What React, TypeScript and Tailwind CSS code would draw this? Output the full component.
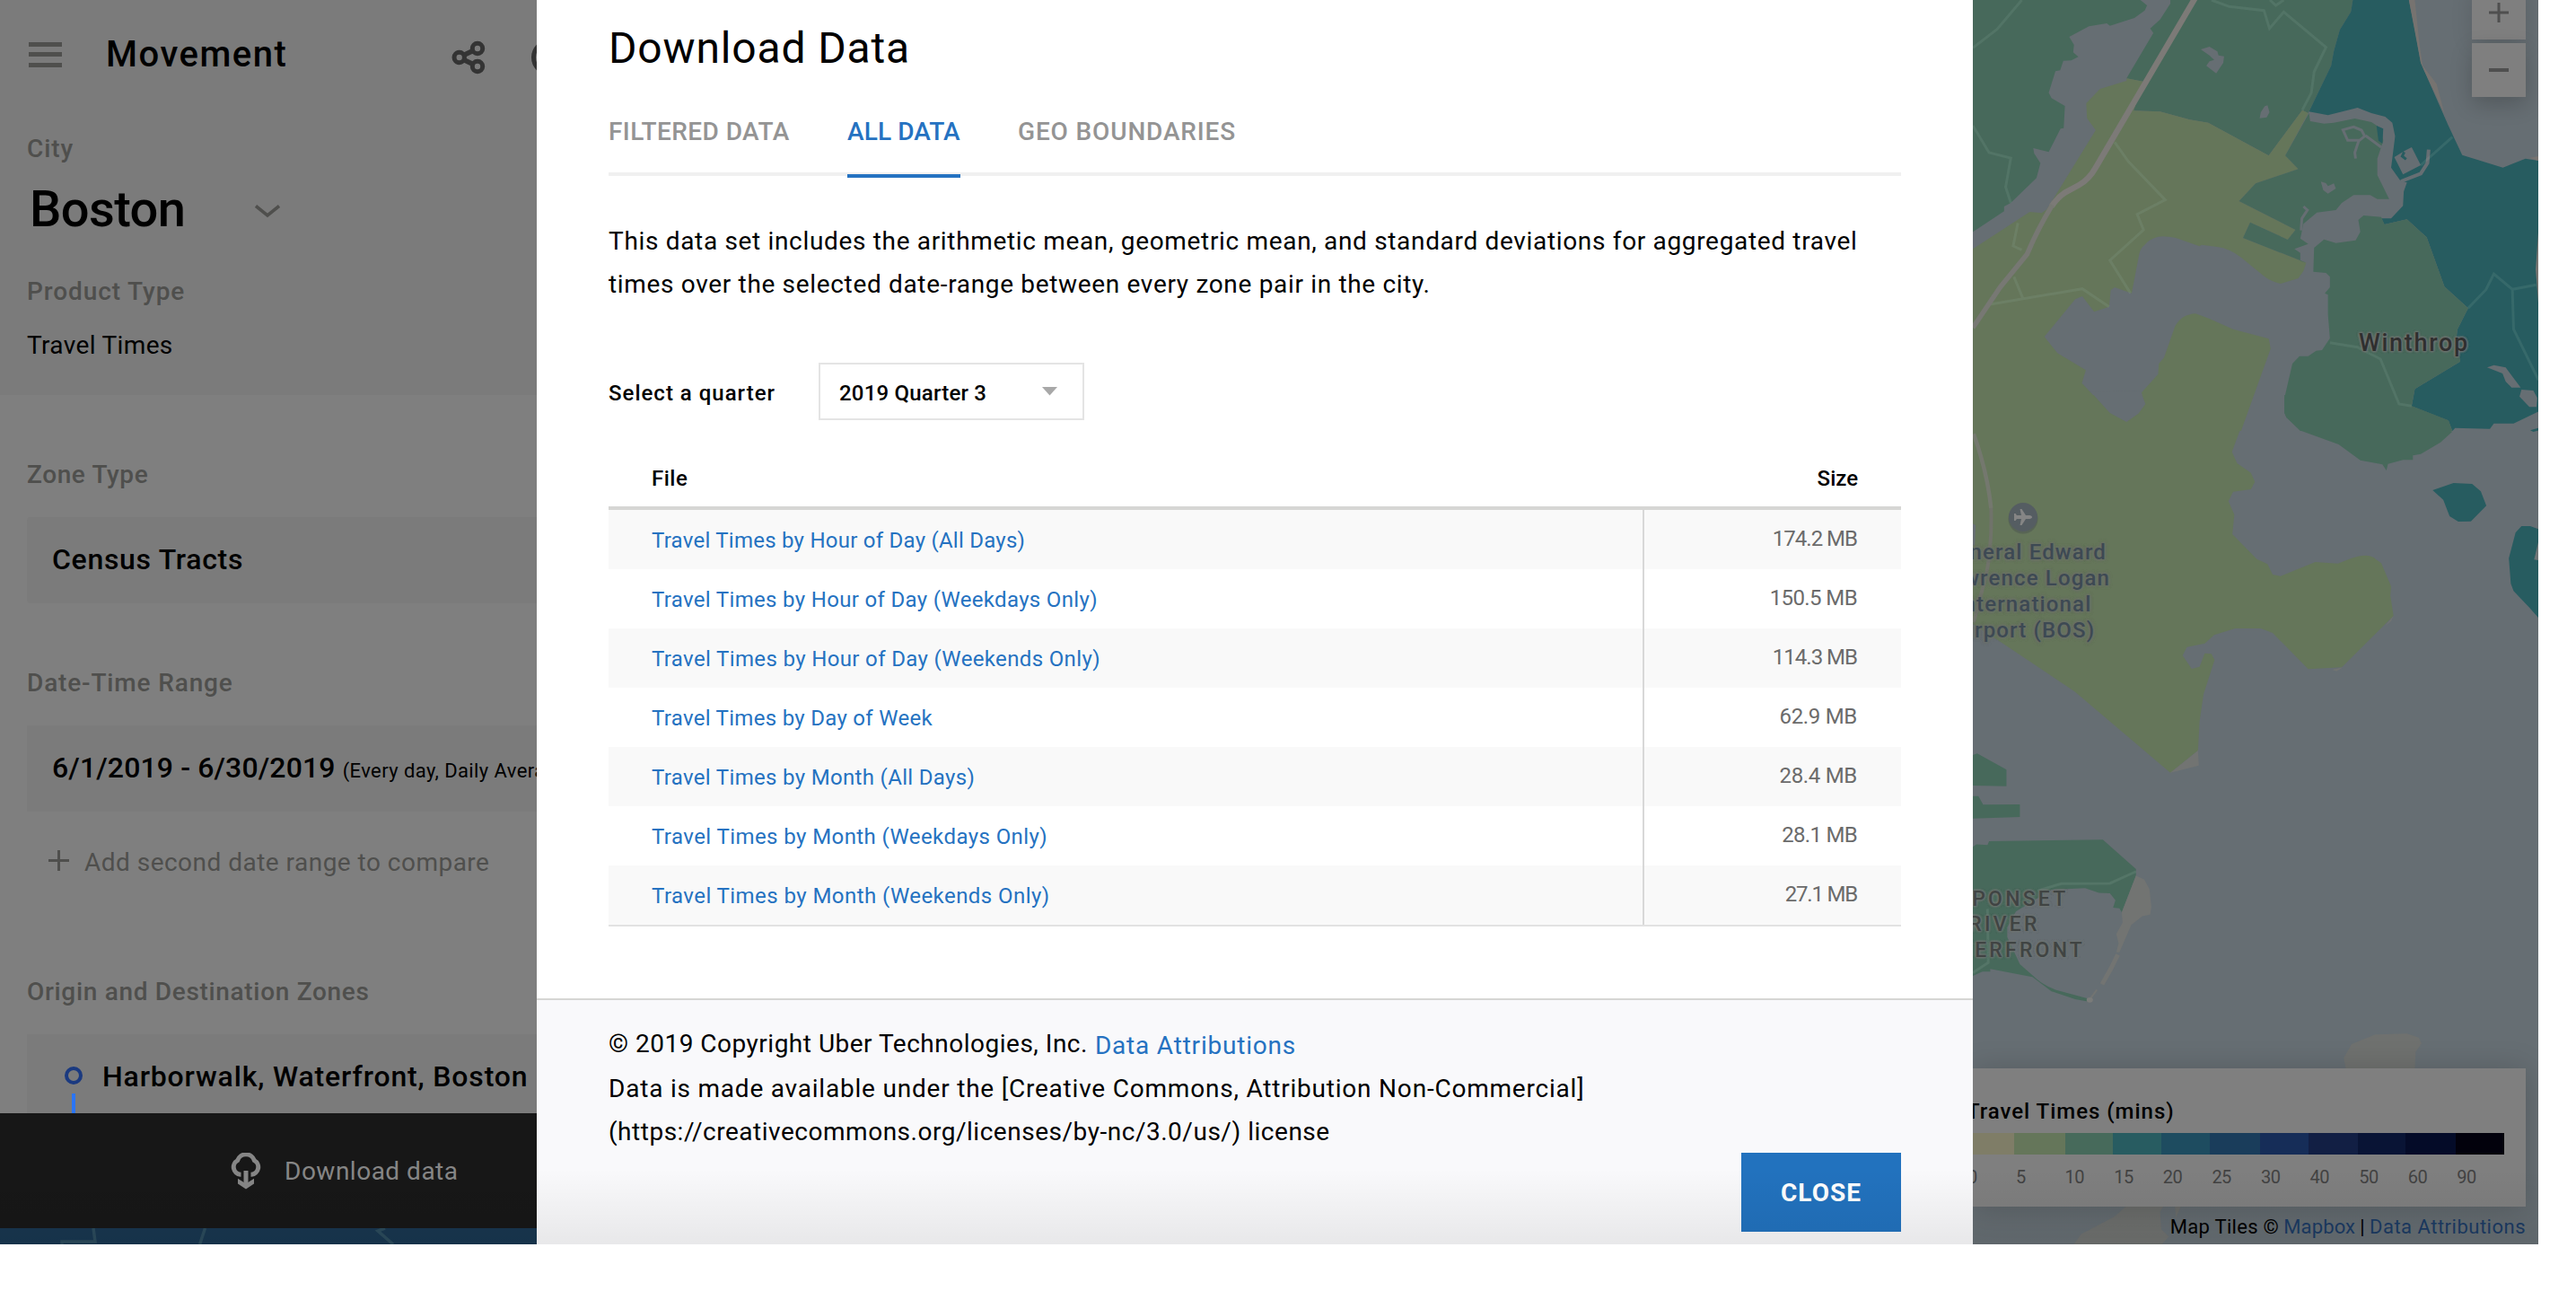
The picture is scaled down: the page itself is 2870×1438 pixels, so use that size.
import type { ReactNode } from "react";

const files = [
  { name: "Travel Times by Hour of Day (All Days)", size: "174.2 MB", nameSpacing: "tracking-[0.25px]", spacing: "tracking-[-1px]" },
  { name: "Travel Times by Hour of Day (Weekdays Only)", size: "150.5 MB", nameSpacing: "tracking-[0.33px]", spacing: "tracking-[-0.6px]" },
  { name: "Travel Times by Hour of Day (Weekends Only)", size: "114.3 MB", nameSpacing: "tracking-[0.36px]", spacing: "tracking-[-1px]" },
  { name: "Travel Times by Day of Week", size: "62.9 MB", nameSpacing: "tracking-[0.3px]", spacing: "tracking-[-0.3px]" },
  { name: "Travel Times by Month (All Days)", size: "28.4 MB", nameSpacing: "tracking-[0.33px]", spacing: "tracking-[-0.3px]" },
  { name: "Travel Times by Month (Weekdays Only)", size: "28.1 MB", nameSpacing: "tracking-[0.42px]", spacing: "tracking-[-0.7px]" },
  { name: "Travel Times by Month (Weekends Only)", size: "27.1 MB", nameSpacing: "tracking-[0.44px]", spacing: "tracking-[-1.2px]" },
];

const scale = [
  { width: "w-[46px]", color: "bg-[#7f7d67]" },
  { width: "w-[57px]", color: "bg-[#65765a]" },
  { width: "w-[53px]", color: "bg-[#476a5b]" },
  { width: "w-[54px]", color: "bg-[#285c61]" },
  { width: "w-[54px]", color: "bg-[#1e4c60]" },
  { width: "w-[56px]", color: "bg-[#1a3d5b]" },
  { width: "w-[54px]", color: "bg-[#162d58]" },
  { width: "w-[55px]", color: "bg-[#121f44]" },
  { width: "w-[53px]", color: "bg-[#091435]" },
  { width: "w-[56px]", color: "bg-[#040b28]" },
  { width: "w-[54px]", color: "bg-[#02010c]" },
];

const ticks = ["5", "10", "15", "20", "25", "30", "40", "50", "60", "90"];

function FieldLabel({ children, className }: { children: ReactNode; className: string }) {
  return (
    <div className={`ml-[30px] h-[40px] shrink-0 text-[28px] leading-[42px] font-medium text-[#4f4f4d] ${className}`}>
      {children}
    </div>
  );
}

function ShareIcon() {
  return (
    <svg width="38" height="40" viewBox="0 0 38 40" fill="none" stroke="#343434" strokeWidth="5">
      <circle cx="8.7" cy="20" r="5.7" />
      <circle cx="29" cy="10" r="5.7" />
      <circle cx="29" cy="30" r="5.7" />
      <path d="M13.5 17.5 24 12.5M13.5 22.5 24 27.5" strokeWidth="5.5" />
    </svg>
  );
}

function CloudDownloadIcon() {
  return (
    <svg width="38" height="41" viewBox="0 0 38 41" fill="none" stroke="#868686" strokeWidth="5">
      <path d="M13.5 24.3H12.8A8.4 8.4 0 0 1 9.6 8.6 9.9 9.9 0 0 1 28.4 8.6 8.4 8.4 0 0 1 25.2 24.3H24.5" />
      <path d="M19 20V35" />
      <path d="M10 28.8 19 34.6 28 28.8V34.4L19 40.4 10 34.4Z" fill="#868686" stroke="none" />
    </svg>
  );
}

function Sidebar() {
  return (
    <aside className="flex h-full w-[598px] shrink-0 flex-col overflow-hidden bg-[#7f7f7f] whitespace-nowrap">
      <div className="h-[440px] shrink-0 bg-[#7b7b7b]">
        <div className="flex h-[121px] items-center">
          <div className="ml-[32px] flex w-[37px] shrink-0 flex-col gap-[6.5px]">
            <div className="h-[5px] bg-[#4f4f4d]" />
            <div className="h-[5px] bg-[#4f4f4d]" />
            <div className="h-[5px] bg-[#4f4f4d]" />
          </div>
          <div className="ml-[49px] w-[385px] shrink-0 text-[40px] leading-[56px] font-medium tracking-[1.5px] text-black">
            Movement
          </div>
          <div className="mt-[7px] shrink-0">
            <ShareIcon />
          </div>
          <div className="mt-[7px] ml-[51px] size-[40px] shrink-0 rounded-full border-[5px] border-[#343434]" />
        </div>
        <FieldLabel className="mt-6 tracking-[0.9px]">City</FieldLabel>
        <div className="mt-4 flex items-center">
          <div className="ml-[33px] w-[251px] text-[56px] leading-[64px] font-medium tracking-[-0.6px] text-black">
            Boston
          </div>
          <svg width="28" height="16" viewBox="0 0 28 16" fill="none" className="mt-1">
            <path d="M1 2.5 14 13 27 2.5" stroke="#4f4f4d" strokeWidth="3.6" />
          </svg>
        </div>
        <FieldLabel className="mt-[39px] tracking-[0.9px]">Product Type</FieldLabel>
        <div className="mt-5 ml-[30px] text-[28px] leading-[42px] tracking-[0.35px] text-black">Travel Times</div>
      </div>

      <FieldLabel className="mt-[68px] tracking-[0.6px]">Zone Type</FieldLabel>
      <div className="mt-7 ml-[30px] flex h-[96px] shrink-0 items-center rounded-l bg-[#7b7b7b] pb-0.5 pl-[28px] text-[32px] font-medium tracking-[0.7px] text-black">
        Census Tracts
      </div>
      <FieldLabel className="mt-[68px] tracking-[0.85px]">Date-Time Range</FieldLabel>
      <div className="mt-7 ml-[30px] flex h-[96px] shrink-0 items-center bg-[#7b7b7b] pb-0.5 pl-[28px] text-black">
        <div className="text-[32px] font-medium tracking-[0.12px]">
          6/1/2019 - 6/30/2019 <span className="text-[22px] font-normal tracking-[0.4px]">(Every day, Daily Average)</span>
        </div>
      </div>
      <div className="mt-9 ml-[54px] flex h-[40px] shrink-0 items-center text-[28px] leading-[42px] tracking-[0.48px] text-[#4f4f4d]">
        <svg width="23" height="23" viewBox="0 0 23 23" className="mr-[17px] mb-1" stroke="#4f4f4d" strokeWidth="3">
          <path d="M11.5 0V23M0 11.5H23" />
        </svg>
        <span className="pt-0.5">Add second date range to compare</span>
      </div>
      <FieldLabel className="mt-[104px] tracking-[0.68px]">Origin and Destination Zones</FieldLabel>
      <div className="mt-7 ml-[30px] flex h-[88px] shrink-0 bg-[#7b7b7b] pl-[42px]">
        <div className="flex w-[20px] flex-col items-center pt-[36px]">
          <div className="size-[20px] shrink-0 rounded-full border-[4px] border-[#1b3a80]" />
          <div className="mt-[10px] h-[22px] w-[4px] bg-[#2a75f7]" />
        </div>
        <div className="ml-[22px] pt-[23px] text-[32px] leading-[48px] font-medium tracking-[0.84px] text-black">
          Harborwalk, Waterfront, Boston
        </div>
      </div>
      <div className="flex h-[128px] shrink-0 items-center bg-[#171717] pl-[255px] text-[28px] tracking-[0.5px] text-[#868686]">
        <CloudDownloadIcon />
        <span className="ml-[24px] pt-0.5">Download data</span>
      </div>
      <svg width="598" height="18" viewBox="0 0 598 18" fill="none" className="shrink-0 bg-[#18364f]">
        <path d="M104 0 106 15H69V18M228.500 0 222.600 18M429 0 421 3 438 18" stroke="#2b4a5b" strokeWidth="3.500" />
      </svg>
    </aside>
  );
}

function DownloadModal() {
  return (
    <section className="flex h-full w-[1600px] shrink-0 flex-col bg-white text-black">
      <div className="flex flex-col px-[80px] pt-[22px]">
        <h1 className="text-[48px] leading-[64px] tracking-[0.85px]">Download Data</h1>
        <div className="mt-10 flex h-[70px] items-start gap-[64px] border-b-4 border-[#f0f0f0] text-[28px] leading-[42px] font-medium whitespace-nowrap text-[#949494]">
          <div className="w-[202px] tracking-[0.45px]">FILTERED DATA</div>
          <div className="h-[72px] w-[126px] border-b-4 border-[#2572c1] tracking-[0.1px] text-[#2572c1]">ALL DATA</div>
          <div className="tracking-[0.85px]">GEO BOUNDARIES</div>
        </div>
        <p className="mt-[49px] text-[28px] leading-[48px] tracking-[0.67px] whitespace-nowrap">
          This data set includes the arithmetic mean, geometric mean, and standard deviations for aggregated travel
          <br />
          times over the selected date-range between every zone pair in the city.
        </p>
        <div className="mt-[63px] flex items-center text-[24px] font-medium">
          <div className="w-[234px] pt-1 tracking-[1px]">Select a quarter</div>
          <div className="flex h-[64px] w-[296px] items-center justify-between border-2 border-[#e4e4e4] pr-[28px] pl-[21px]">
            <span className="pt-1 tracking-[0.2px]">2019 Quarter 3</span>
            <svg width="17" height="10" viewBox="0 0 17 10">
              <path d="M0 0H17L8.500 9.500Z" fill="#a8a8a8" />
            </svg>
          </div>
        </div>
        <div className="mt-8 flex h-[68px] items-center justify-between border-b-4 border-[#d6d6d4] px-12 pt-px text-[24px] font-medium">
          <span className="tracking-[0.5px]">File</span>
          <span>Size</span>
        </div>
        <div className="border-b-2 border-[#e2e2e2] text-[24px]">
          {files.map((f) => (
            <div key={f.name} className="flex h-[66px] odd:bg-[#f9f9f9]">
              <div className={`flex w-[1154px] items-center border-r-2 border-[#d8d8d8] pt-0.5 pl-12 text-[#2572c1] ${f.nameSpacing}`}>
                {f.name}
              </div>
              <div className={`flex flex-1 items-center justify-end pr-[49px] pb-0.5 text-[#6b6b6b] ${f.spacing}`}>{f.size}</div>
            </div>
          ))}
        </div>
      </div>
      <footer className="mt-[80px] flex flex-1 flex-col border-t-2 border-[#d6d6d4] bg-[#f9f9fb] px-[80px] pt-[25px] text-[28px] leading-[48px] whitespace-nowrap">
        <div className="flex">
          <span className="tracking-[0.5px]">© 2019 Copyright Uber Technologies, Inc.</span>
          <span className="ml-[8px] pt-[3px] leading-[46px] tracking-[0.8px] text-[#2572c1]">Data Attributions</span>
        </div>
        <p className="mt-px tracking-[0.79px]">
          Data is made available under the [Creative Commons, Attribution Non-Commercial]
          <br />
          <span className="tracking-[0.52px]">(https://creativecommons.org/licenses/by-nc/3.0/us/) license</span>
        </p>
        <button className="mt-[-1px] flex h-[88px] w-[178px] items-center justify-center self-end bg-[#2272be] pt-0.5 text-[28px] font-bold tracking-[1px] text-white">
          CLOSE
        </button>
      </footer>
    </section>
  );
}

const WATER = "#666e73";
const OLIVE = "#65765a";
const GREEN = "#47695b";
const TEAL = "#275c60";
const SAND = "#727472";

function MapCanvas() {
  return (
    <svg width="630" height="1386" viewBox="18 0 630 1386" className="absolute inset-0">
      <rect x="18" width="630" height="1386" fill={WATER} />
      <g transform="translate(0 440) scale(0.44004 0.33333)">
        <path
          fill={OLIVE}
          d="M41 0H750L697 190 710 228 745 260 755 290 745 315 700 323 688 355 703 400 698 465 760 548 787 565 800 600 820 605 908 558 965 563 1000 545Q1045 525 1062 550L1075 562 1100 640 1098 670 1106 738 975 910 890 916 800 795 770 780H705L652 802 628 830 583 842 572 870 595 915 615 908 628 863 645 865 653 885 625 1000 615 1090 611 1188 541 1262 300 992 100 815 41 765Z"
        />
        <path fill={SAND} d="M541 1262 611 1188 613 1238ZM1106 738 1085 772 1100 755ZM950 918 978 910 962 923Z" />
        <path
          fill={GREEN}
          d="M830 0H1110L1152 37 1245 85 1250 120 1255 122 1225 158 1175 197 1155 202V217H1130L1092 230 1088 252 1078 232 1022 218 967 165 873 120 835 75 830 60ZM41 1203 52 1198 126 1252V1307L41 1305ZM41 1340H55L67 1369 160 1368V1410L41 1415Z"
        />
        <path
          fill={TEAL}
          d="M1205 318 1258 294 1305 297 1327 322 1341 370 1302 422 1270 423 1248 405 1232 350ZM1473 448 1452 438H1430L1415 460 1398 545 1403 630 1410 655 1450 710 1473 745ZM1452 118 1473 110V118L1460 123Z"
        />
        <path fill="#6d7375" d="M1473 490 1462 550 1473 552Z" />
        <path
          d="M43 130Q78 260 87 378"
          stroke="#7b7a77"
          strokeWidth="4.5"
          fill="none"
          opacity="0.7"
          vectorEffect="non-scaling-stroke"
        />
        <path
          d="M87 378Q90 500 75 600L43 760"
          stroke="#70736a"
          strokeWidth="4"
          fill="none"
          vectorEffect="non-scaling-stroke"
        />
        <path fill={WATER} d="M41 430 48 435 46 500 41 505Z" />
      </g>

      <g transform="scale(0.44004 0.33333)">
        <path
          fill={GREEN}
          d="M41 0H465L482 18 476 35 450 60 388 86 380 78 335 88 285 123 297 150 295 175 308 190 290 202 270 203 262 235 250 238 233 310 240 328 274 354 271 428 263 430 233 508 194 495 196 512 212 545 202 595 137 678 120 690V706L41 775Z"
        />
        <path
          fill={GREEN}
          d="M541 0 541 12 515 65 490 95 498 110 430 262 472 272 448 370 515 373 590 400 637 410 790 520 875 368 890 378 948 220 955 170 970 100 998 40 1003 0Z"
        />
        <path
          fill={OLIVE}
          d="M430 262 472 272 448 370 515 373 590 400 637 410 790 520 875 368 890 378 832 520 865 565 757 613 715 672 858 768 838 801 743 743 725 795 885 878 878 905 865 930 820 948Q795 940 780 925L720 860Q690 830 660 825L620 818 615 823 555 795Q525 787 510 791 485 800 475 820 465 830 462 850L443 980 400 960 390 970 386 1025 348 1042 318 990 300 1000 222 1125 255 1180 327 1237 317 1280 388 1380 430 1410 465 1380 478 1350 468 1312 510 1250 512 1215 525 1195 553 1090Q570 1050 605 1048L640 1065 700 1100 790 1132 795 1165 720 1440H41V832L185 708 215 712 228 700 352 435 330 395 328 345 363 297 430 270Z"
        />
        <path fill={WATER} d="M340 1310 388 1380 430 1410 460 1382 478 1350 465 1305Z" />
        <path
          fill={GREEN}
          d="M892 378 895 405 930 413 955 410 1008 396 1050 408 1075 430 1080 470 1065 530V585L1095 665 1065 665 1047 652H1005L975 678 960 702 912 710 878 748 870 797 890 815 855 832 870 845V872L885 878 725 795 743 743 838 801 858 768 715 672 757 613 865 565 832 520Z"
        />
        <path
          fill={TEAL}
          d="M1003 0H1145L1160 100 1175 210 1185 240 1245 420 1280 518 1383 560 1440 530 1473 537V1375L1410 1415H1360L1350 1433 1262 1430 1255 1440 1245 1405 1152 1357 1160 1300 1275 1208 1265 1130 1268 1100 1295 1030 1235 958 1190 793 1140 733 1083 750 1075 730 1100 730 1130 688 1132 640 1140 610 1123 603 1100 560 1110 455 1103 410 1085 390 1050 378 1015 360 940 385 892 373 948 220 955 170 970 100 998 40ZM1063 420 1080 430 1078 480 1068 470Z"
        />
        <path
          fill={GREEN}
          d="M903 908 905 828 930 800 960 812 1010 803 1022 775 1017 735 1030 720 1075 725 1083 750 1140 733 1190 793 1235 958 1295 1030 1268 1100 1265 1130 1275 1208 1160 1300 1152 1357 1245 1405 1255 1440H870L835 1395 830 1380V1330L850 1215 868 1190H890L910 1172 925 1170 945 1130 940 1050V985L932 980 945 960V925L935 912Z"
        />
        <path fill="#767370" d="M1145 0H1160L1172 150 1180 220 1215 280 1235 380 1185 240 1175 210ZM1473 522 1450 528 1473 537ZM1473 768 1466 900 1473 1020Z" />
        <path
          fill={WATER}
          d="M1108 525 1135 503 1152 492 1175 552 1130 583ZM1343 1228 1360 1220 1390 1228 1428 1295H1405L1390 1275 1382 1248ZM1430 1302 1460 1305 1470 1330 1468 1360 1450 1360 1425 1325ZM618 165 640 156 660 172 663 185 677 188 675 210 657 245 632 220 640 205 652 200 640 185ZM787 352 792 375 785 392 767 395 770 375 780 355ZM922 607 935 612 940 622 955 613 960 630 940 647 928 635Z"
        />
        <path d="M1133 508 1128 522 1138 532" stroke={TEAL} strokeWidth="3" fill="none" vectorEffect="non-scaling-stroke" />
        <g fill="none" stroke={WATER} strokeWidth="3">
          <path
            d="M978 434 1005 424 1025 435 1033 455 1020 469H990ZM1035 453 1075 492M1018 470 1008 510 1010 530M878 690 888 702 874 730 872 770"
            vectorEffect="non-scaling-stroke"
          />
          <path d="M1195 500 1192 545 1175 580 1125 606" strokeWidth="4" vectorEffect="non-scaling-stroke" />
        </g>
        <path
          d="M165 0 102 98 41 160M41 420 82 510 137 528 124 625 137 678M645 0 690 22 778 35 792 95 828 40 935 158 905 240 898 310 875 368M793 0 808 18 828 0M400 475 435 540 528 668 457 716 473 768 388 870 440 980M155 745 143 822 165 835M145 925 168 998M85 1017 318 965 386 1025M945 1145 1015 1160 1073 1200 1120 1350 1152 1357M1255 458 1175 552M1295 1030 1340 968 1360 915 1407 967 1467 952M1407 967 1410 1100 1473 1270"
          fill="none"
          stroke="#a0c0b0"
          strokeOpacity="0.13"
          strokeWidth="3"
          vectorEffect="non-scaling-stroke"
        />
        <path
          d="M603 -5 352 560Q335 600 310 618L275 643Q255 660 240 690"
          fill="none"
          stroke="#7c7a77"
          strokeWidth="6.500"
          vectorEffect="non-scaling-stroke"
        />
        <path
          d="M242 685Q205 765 178 850L110 960 41 1095"
          fill="none"
          stroke="#777873"
          strokeWidth="5.500"
          vectorEffect="non-scaling-stroke"
        />
      </g>

      <g transform="translate(0 880) scale(0.44004 0.35587)">
        <path
          fill={GREEN}
          d="M41 178 50 170 78 172 82 160 370 155 454 247V268L418 383 412 370 396 368 402 345 388 323 360 322 325 307 240 312 150 380 128 430V460L160 545 195 583Q215 608 250 625L330 652 332 662 300 655 240 630 192 585 85 560V568H65L41 582Z"
        />
        <path fill={SAND} d="M454 268 475 280 488 310 493 365 490 390 470 395 442 422 412 508H404L410 480 404 450 420 415 418 383Z" />
        <path d="M408 515 390 560 368 608" stroke={SAND} strokeWidth="5" fill="none" vectorEffect="non-scaling-stroke" />
        <path d="M355 625 337 655" stroke={SAND} strokeWidth="2" fill="none" vectorEffect="non-scaling-stroke" />
        <ellipse cx="337" cy="657" rx="8" ry="8" fill="#7a7b79" />
        <path
          d="M205 315 265 293 388 292 454 255M78 372 80 540 41 572"
          fill="none"
          stroke="#a0c0b0"
          strokeOpacity="0.14"
          strokeWidth="3"
          vectorEffect="non-scaling-stroke"
        />
        <path
          fill="#6f716f"
          d="M1000 795 1060 765 1140 762 1170 775 1177 793 1162 820 1160 871H985L980 838ZM428 1304 400 1335 315 1390 297 1421H520L537 1398 518 1375 515 1320 523 1304ZM553 1304H567L555 1340Z"
        />
      </g>

      <circle cx="74" cy="578" r="16.500" fill="#4b5350" opacity="0.5" />
      <circle cx="74" cy="576" r="16" fill="#555d62" />
      <path
        fill="#858585"
        d="M84 576C84 574.600 82 574 80 574H77L72.500 567H70.500L72 574H67L65.500 572H64V580H65.500L67 578H72L70.500 585H72.500L77 578H80C82 578 84 577.400 84 576Z"
      />
    </svg>
  );
}

function MapPanel() {
  return (
    <section className="relative h-full w-[630px] shrink-0 overflow-hidden">
      <MapCanvas />
      <div className="absolute top-[-16px] right-[14px] flex flex-col gap-1">
        <div className="flex size-[60px] items-center justify-center bg-[#7f7f7f] shadow-[0_6px_24px_rgba(0,0,0,0.12)]">
          <svg width="22" height="22" viewBox="0 0 22 22" stroke="#4f4f4f" strokeWidth="3">
            <path d="M11 0V22M0 11H22" />
          </svg>
        </div>
        <div className="flex size-[60px] items-center justify-center bg-[#7f7f7f] shadow-[0_8px_24px_rgba(0,0,0,0.2)]">
          <div className="h-[4px] w-[22px] bg-[#4f4f4f]" />
        </div>
      </div>
      <div className="absolute top-[366px] left-[430px] text-[27px] leading-[32px] font-medium tracking-[1.7px] text-[#2f2f2f] [text-shadow:0_0_3px_#737573,0_0_3px_#737573,0_0_3px_#737573,0_0_3px_#737573]">
        Winthrop
      </div>
      <div className="absolute top-[601px] left-[-73px] w-[260px] text-center text-[24px] leading-[29px] font-medium tracking-[1.15px] text-[#3d4953] [text-shadow:0_0_3px_#6b7068,0_0_3px_#6b7068,0_0_4px_#6b7068,0_0_4px_#6b7068]">
        General Edward
        <br />
        Lawrence Logan
        <br />
        International
        <br />
        Airport (BOS)
      </div>
      <div className="absolute top-[988px] left-[-95px] w-[260px] text-center text-[23px] leading-[28.400px] font-medium tracking-[3.200px] text-[#404443] [text-shadow:0_0_3px_#6f7572,0_0_3px_#6f7572,0_0_3px_#6f7572,0_0_3px_#6f7572]">
        NEPONSET
        <br />
        RIVER
        <br />
        WATERFRONT
      </div>
      <div className="absolute top-[1190px] left-0 flex h-[154px] w-[616px] flex-col overflow-hidden bg-[#7f7f7f] pt-8 shadow-[0_2px_32px_rgba(0,0,0,0.18)]">
        <div className="ml-[-7px] text-[24px] leading-[32px] font-medium tracking-[0.98px] whitespace-nowrap text-black">
          Travel Times (mins)
        </div>
        <div className="mt-2 flex h-6">
          {scale.map((s) => (
            <div key={s.color} className={`h-full ${s.width} ${s.color}`} />
          ))}
        </div>
        <div className="mt-[13px] flex text-[20px] leading-[24px] text-[#424242]">
          <div className="ml-[-6px] w-[54px]">0</div>
          {ticks.map((t) => (
            <div key={t} className="w-[54.600px] tracking-[-0.5px]">
              {t}
            </div>
          ))}
        </div>
      </div>
      <div className="absolute right-[14px] bottom-[7px] flex gap-[5px] text-[22px] leading-[24px] tracking-[0.45px] whitespace-nowrap text-black">
        <span className="tracking-[0.3px]">Map Tiles ©</span>
        <span className="tracking-[0.15px] text-[#1b3a62]">Mapbox</span>
        <span>|</span>
        <span className="tracking-[0.5px] text-[#1b3a62]">Data Attributions</span>
      </div>
    </section>
  );
}

export default function App() {
  return (
    <main className="h-[1438px] w-[2870px] overflow-hidden bg-white font-[Roboto,'Liberation_Sans',sans-serif]">
      <div className="relative flex h-[1386px] w-[2828px] overflow-hidden">
        <Sidebar />
        <DownloadModal />
        <MapPanel />
        <div className="pointer-events-none absolute inset-x-0 bottom-0 h-[84px] bg-linear-to-b from-transparent to-black/7" />
      </div>
    </main>
  );
}
